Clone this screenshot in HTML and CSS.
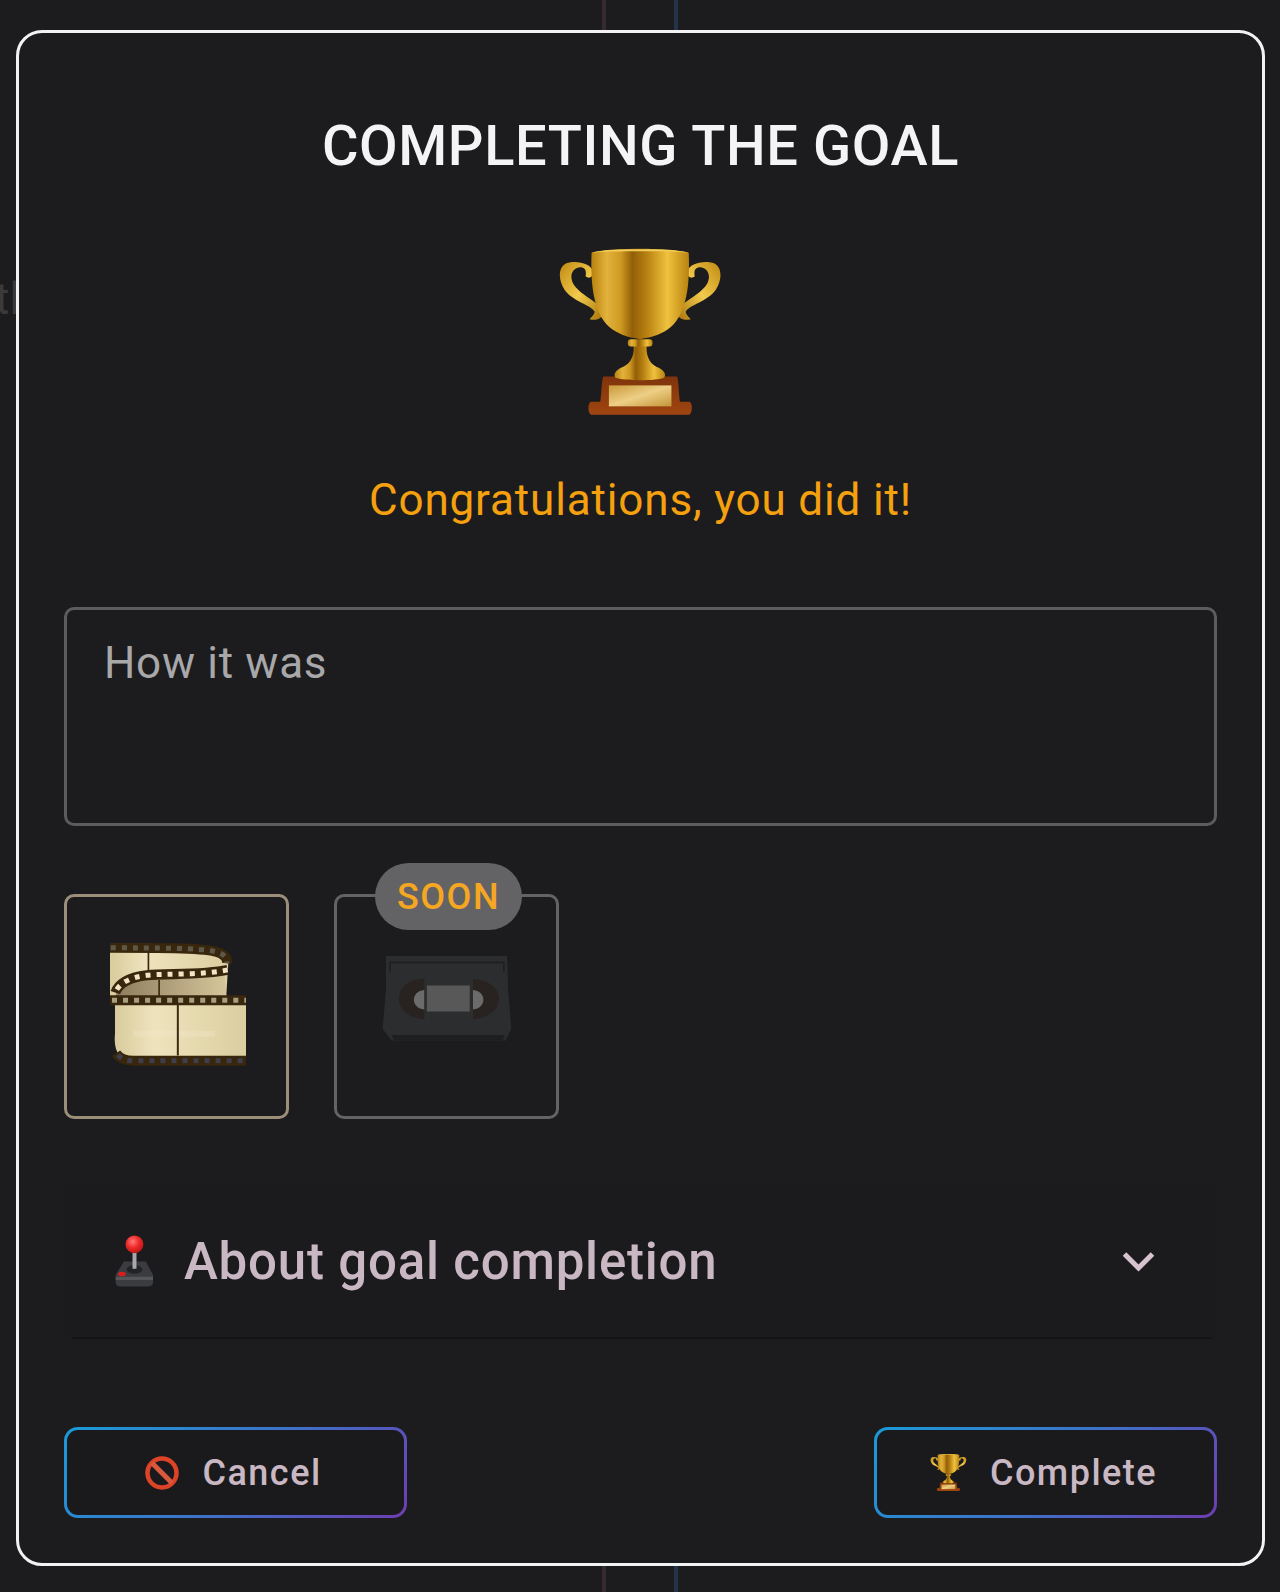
FILE: index.html
```html
<!DOCTYPE html>
<html lang="en">
<head>
  <meta charset="UTF-8">
  <title>Completing the goal</title>
  <link rel="stylesheet" href="styles.css">
</head>
<body>
  <!-- what shows behind the dialog -->
  <div class="behind-line behind-line-red"></div>
  <div class="behind-line behind-line-blue"></div>
  <div class="behind-text">tl</div>

  <svg class="defs" width="0" height="0">
    <defs>
      <linearGradient id="goldBowl" x1="0" y1="0" x2="1" y2="0">
        <stop offset="0" stop-color="#b9820f"/>
        <stop offset="0.16" stop-color="#e2b23c"/>
        <stop offset="0.3" stop-color="#cf9a22"/>
        <stop offset="0.42" stop-color="#925f08"/>
        <stop offset="0.56" stop-color="#b67f10"/>
        <stop offset="0.78" stop-color="#efc23e"/>
        <stop offset="1" stop-color="#b9820f"/>
      </linearGradient>
      <linearGradient id="goldHandle" x1="0" y1="0" x2="1" y2="1">
        <stop offset="0" stop-color="#c08a12"/>
        <stop offset="0.5" stop-color="#f2ca4c"/>
        <stop offset="1" stop-color="#a8740c"/>
      </linearGradient>
      <linearGradient id="goldPlate" x1="0" y1="0" x2="1" y2="1">
        <stop offset="0" stop-color="#c9983a"/>
        <stop offset="0.5" stop-color="#edcf85"/>
        <stop offset="1" stop-color="#c4953a"/>
      </linearGradient>
      <linearGradient id="woodBase" x1="0" y1="0" x2="0" y2="1">
        <stop offset="0" stop-color="#7f340c"/>
        <stop offset="1" stop-color="#a04510"/>
      </linearGradient>
      <linearGradient id="filmCream" x1="0" y1="0" x2="1" y2="0">
        <stop offset="0" stop-color="#d8cb9c"/>
        <stop offset="0.3" stop-color="#eee3bd"/>
        <stop offset="1" stop-color="#dbcea0"/>
      </linearGradient>
      <linearGradient id="filmInner" x1="0" y1="0" x2="1" y2="0">
        <stop offset="0" stop-color="#8d7d5c"/>
        <stop offset="0.6" stop-color="#b9a883"/>
        <stop offset="1" stop-color="#d5c69a"/>
      </linearGradient>
      <radialGradient id="ballRed" cx="0.4" cy="0.35" r="0.7">
        <stop offset="0" stop-color="#ff7a78"/>
        <stop offset="0.5" stop-color="#ee2a2a"/>
        <stop offset="1" stop-color="#b81414"/>
      </radialGradient>
      <symbol id="trophy" viewBox="88 55 490 500">
        <path id="handle" fill="url(#goldHandle)" d="M190 125C185 100 140 90 110 100C85 112 85 150 105 180C130 215 185 225 195 245C195 255 185 262 180 268C205 275 225 262 218 240C205 215 150 195 130 160C118 135 130 115 150 112C170 112 170 125 168 140C180 148 192 140 190 125Z"/>
        <use href="#handle" transform="translate(664 0) scale(-1 1)"/>
        <path fill="url(#woodBase)" d="M222 440H442C448 442 448 500 452 516H480C490 520 490 548 480 555H184C174 548 174 520 184 516H212C216 500 216 442 222 440Z"/>
        <rect x="238" y="467" width="188" height="63" fill="url(#goldPlate)"/>
        <path fill="url(#goldBowl)" d="M312 340C316 375 306 398 280 412C258 420 250 436 258 444C280 454 385 454 404 444C412 436 404 420 382 412C358 398 348 375 352 340Z"/>
        <rect x="295" y="328" width="74" height="22" rx="9" fill="url(#goldBowl)"/>
        <path fill="url(#goldBowl)" d="M186 68C230 52 432 52 478 68C482 170 472 270 404 306C378 320 355 324 332 328C305 324 285 320 260 306C192 270 182 170 186 68Z"/>
        <path fill="#f3cd5a" d="M186 68C230 54 432 54 478 68C432 62 230 62 186 68Z"/>
      </symbol>
    </defs>
  </svg>

  <div class="modal">
    <h1 class="modal-title">COMPLETING THE GOAL</h1>

    <svg class="big-trophy"><use href="#trophy"/></svg>

    <p class="congrats">Congratulations, you did it!</p>

    <textarea class="how-it-was" placeholder="How it was"></textarea>

    <div class="card-row">
      <div class="card card-selected">
        <!-- film strip -->
        <svg class="film" viewBox="60 70 407 367">
          <path fill="url(#filmCream)" d="M60 96H372C400 100 412 112 414 130L408 228H60Z"/>
          <path fill="url(#filmInner)" d="M76 228C86 195 130 178 180 172C260 168 340 170 402 158L408 228Z"/>
          <path fill="none" stroke="#3b2a10" stroke-width="5" d="M175 98V152M207 180V228"/>
          <path class="film-band" d="M60 84C200 84 330 84 375 95C400 102 412 112 410 130"/>
          <path class="film-holes film-holes-dim" d="M62 84C200 84 330 84 375 95C400 102 412 112 410 130"/>
          <path class="film-band" d="M412 150C340 166 230 160 170 166C120 172 86 190 76 218"/>
          <path class="film-holes film-holes-bright" d="M412 150C340 166 230 160 170 166C120 172 86 190 76 218"/>
          <path fill="url(#filmCream)" d="M75 252H467V410H90C76 390 72 370 75 340Z"/>
          <path fill="#f2e8c8" opacity="0.35" d="M130 332H375V350H130Z"/>
          <path fill="none" stroke="#3b2a10" stroke-width="6" d="M263 254V406"/>
          <path class="film-band" d="M60 241H467"/>
          <path class="film-holes film-holes-mid" d="M66 241H467"/>
          <path class="film-band" d="M78 400C88 414 104 422 130 422H467"/>
          <path class="film-holes film-holes-dark" d="M84 404C94 416 108 422 130 422H467"/>
        </svg>
      </div>
      <div class="card">
        <span class="soon-badge">SOON</span>
        <!-- vhs tape -->
        <svg class="vhs" viewBox="60 70 400 275">
          <path fill="#2e2f31" d="M72 75H445L448 180L458 300L440 335H90L62 300L72 180Z"/>
          <path fill="none" stroke="#1f2021" stroke-width="5" d="M85 125V95H435V125"/>
          <path fill="#1f2021" d="M90 318H438L432 335H96Z"/>
          <path fill="#2a2321" d="M190 145C140 145 112 175 112 205C112 240 140 265 190 270Z"/>
          <path fill="#2a2321" d="M340 145C390 150 420 175 420 205C420 240 390 265 340 270Z"/>
          <path fill="#727272" d="M190 180C170 182 158 195 158 210C158 225 170 238 190 240Z"/>
          <path fill="#727272" d="M340 180C360 182 372 195 372 210C372 225 360 238 340 240Z"/>
          <rect x="198" y="166" width="132" height="80" fill="#5e5e5e"/>
        </svg>
      </div>
    </div>

    <div class="about">
      <!-- joystick -->
      <svg class="joystick" viewBox="195 103 115 155">
        <path fill="#3b3c3f" d="M222 182H288L310 222V245C310 254 304 258 295 258H212C203 258 197 254 197 245V222Z"/>
        <path fill="#55565a" d="M197 228H310V238H197Z"/>
        <ellipse cx="254" cy="206" rx="24" ry="13" fill="#222326"/>
        <rect x="248" y="152" width="12" height="52" fill="#a9a9ad"/>
        <circle cx="254" cy="130" r="27" fill="url(#ballRed)"/>
        <ellipse cx="216" cy="220" rx="12" ry="7" fill="#d41f1f"/>
      </svg>
      <span class="about-label">About goal completion</span>
      <svg class="chevron" viewBox="0 0 33 21">
        <path d="M2.5 3L16.5 17L30.5 3"/>
      </svg>
    </div>
    <div class="about-rule"></div>

    <div class="buttons">
      <button class="btn" type="button">
        <svg class="btn-icon-cancel" viewBox="0 0 34 34">
          <circle cx="17" cy="17" r="14.5" fill="none" stroke="#dd4326" stroke-width="4.5"/>
          <path d="M7 7L27 27" stroke="#d9593f" stroke-width="5"/>
        </svg>
        Cancel
      </button>
      <button class="btn btn-complete" type="button">
        <svg class="btn-icon-trophy"><use href="#trophy"/></svg>
        Complete
      </button>
    </div>
  </div>
</body>
</html>
```

FILE: styles.css
```css
* {
  box-sizing: border-box;
}

html, body {
  margin: 0;
  padding: 0;
  height: 1592px;
  overflow: hidden;
}

body {
  position: relative;
  padding: 30px 15px 0 16px;
  background: #1c1c1e;
  font-family: Roboto, "Liberation Sans", sans-serif;
}

.defs {
  position: absolute;
}

.behind-line {
  position: absolute;
  top: 0;
  bottom: 0;
  width: 4px;
}

.behind-line-red {
  left: 602px;
  background: #362a2e;
}

.behind-line-blue {
  left: 674px;
  background: #233349;
}

.behind-text {
  position: absolute;
  left: -5px;
  top: 273px;
  font-size: 44px;
  line-height: 52px;
  color: #3a3a3c;
}

.modal {
  position: relative;
  display: flex;
  flex-direction: column;
  height: 1536px;
  padding: 83px 45px 0;
  background: #1c1c1e;
  border: 3px solid #f2f2f4;
  border-radius: 26px;
}

.modal-title {
  margin: 0;
  font-size: 56px;
  line-height: 60px;
  font-weight: 500;
  letter-spacing: 0.6px;
  text-align: center;
  color: #f4f4f6;
}

.big-trophy {
  display: block;
  align-self: center;
  width: 163px;
  height: 167px;
  margin-top: 72px;
}

.congrats {
  margin: 59px 0 0;
  font-size: 44px;
  line-height: 52px;
  letter-spacing: 0.85px;
  text-align: center;
  color: #f5a00f;
}

.how-it-was {
  display: block;
  width: 100%;
  height: 219px;
  margin-top: 81px;
  padding: 27px 37px;
  background: transparent;
  border: 3px solid #5c5c5e;
  border-radius: 10px;
  font-family: inherit;
  font-size: 44px;
  line-height: 52px;
  letter-spacing: 0.7px;
  resize: none;
  outline: none;
}

.how-it-was::placeholder {
  color: #a8a8aa;
  opacity: 1;
}

.card-row {
  display: flex;
  gap: 45px;
  margin-top: 68px;
}

.card {
  position: relative;
  display: flex;
  justify-content: center;
  width: 225px;
  height: 225px;
  border: 3px solid #636365;
  border-radius: 10px;
}

.card-selected {
  border-color: #9c8f7a;
}

.film {
  width: 136px;
  height: 123px;
  margin-top: 46px;
  margin-left: 2px;
}

.film-band {
  fill: none;
  stroke: #38260d;
  stroke-width: 30;
}

.film-holes {
  fill: none;
  stroke-width: 15;
  stroke-dasharray: 15 18;
}

.film-holes-dim {
  stroke: #5e5848;
}

.film-holes-bright {
  stroke: #f1e7c6;
}

.film-holes-mid {
  stroke: #a89f80;
}

.film-holes-dark {
  stroke: #3f3e4c;
}

.vhs {
  width: 130px;
  height: 90px;
  margin-top: 57px;
  margin-left: 1px;
  opacity: 0.92;
}

.soon-badge {
  position: absolute;
  left: 38px;
  top: -34px;
  width: 147px;
  height: 67px;
  border-radius: 34px;
  background: #636365;
  font-size: 36px;
  line-height: 69px;
  font-weight: 500;
  letter-spacing: 1.5px;
  text-align: center;
  color: #f5a623;
}

.about {
  display: flex;
  align-items: center;
  height: 152px;
  margin-top: 66px;
  padding: 0 62px 0 51px;
  background: #1b1b1d;
}

.about-rule {
  height: 2px;
  margin: 0 5px 0 8px;
  background: #141416;
}

.joystick {
  width: 38px;
  height: 52px;
  margin-right: 31px;
}

.about-label {
  flex: 1;
  font-size: 51px;
  font-weight: 500;
  letter-spacing: 0.8px;
  color: #c9b8c4;
}

.chevron {
  width: 33px;
  height: 21px;
}

.chevron path {
  fill: none;
  stroke: #d6c3cf;
  stroke-width: 5;
}

.buttons {
  display: flex;
  justify-content: space-between;
  margin-top: 88px;
}

.btn {
  display: flex;
  align-items: center;
  justify-content: center;
  gap: 23px;
  width: 343px;
  height: 91px;
  padding: 0 4px 0 0;
  border: 3px solid transparent;
  border-radius: 14px;
  background: linear-gradient(#1a1a1c, #1a1a1c) padding-box,
    linear-gradient(135deg, #1a9bd7, #3f70c8 55%, #6d3db0) border-box;
  font-family: inherit;
  font-size: 36px;
  font-weight: 500;
  letter-spacing: 1.5px;
  color: #c9b8c4;
}

.btn-icon-cancel {
  width: 34px;
  height: 34px;
}

.btn-icon-trophy {
  width: 37px;
  height: 37px;
}
```
